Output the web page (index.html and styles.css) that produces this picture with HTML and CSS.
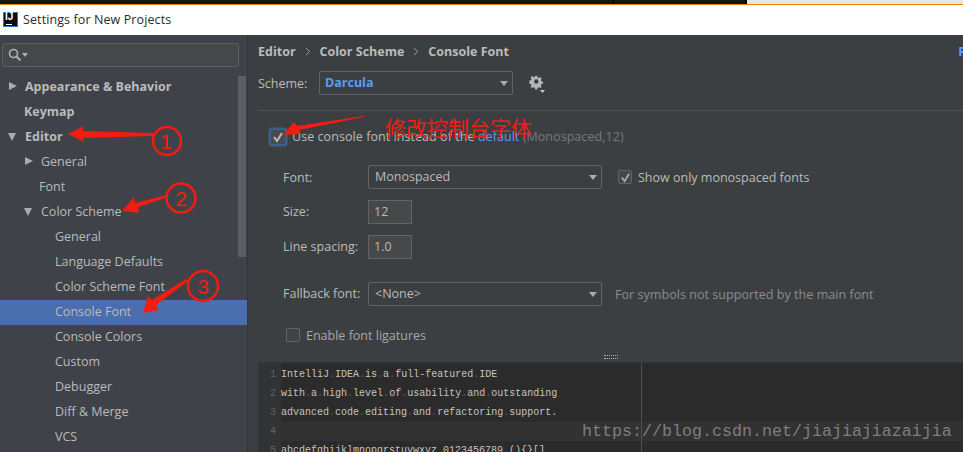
FILE: index.html
```html
<!DOCTYPE html>
<html lang="en">
<head>
<meta charset="utf-8">
<title>Settings for New Projects</title>
<link rel="stylesheet" href="styles.css">
</head>
<body>
<div class="strip"><div class="strip-dark"><span class="strip-tick"></span></div><div class="strip-light"></div></div>
<header class="titlebar">
  <div class="logo"><span class="logo-text">IJ</span><span class="logo-bar"></span></div>
  <span class="title">Settings for New Projects</span>
</header>
<main class="body">
  <aside class="sidebar">
    <div class="search">
      <svg class="search-icon" width="20" height="14" viewBox="0 0 20 14"><circle cx="5.5" cy="5.5" r="4" fill="none" stroke="#aeb0b2" stroke-width="1.6"/><path d="M8.5 8.5l4 4" stroke="#aeb0b2" stroke-width="2"/><path d="M14 5h6l-3 4z" fill="#aeb0b2"/></svg>
    </div>
    <ul class="tree">
      <li class="node bold lvl0"><span class="tri right"></span>Appearance &amp; Behavior</li>
      <li class="node bold lvl0b">Keymap</li>
      <li class="node bold lvl0"><span class="tri down"></span>Editor</li>
      <li class="node lvl1"><span class="tri right small"></span>General</li>
      <li class="node lvl1b">Font</li>
      <li class="node lvl1"><span class="tri down small"></span>Color Scheme</li>
      <li class="node lvl2">General</li>
      <li class="node lvl2">Language Defaults</li>
      <li class="node lvl2">Color Scheme Font</li>
      <li class="node lvl2 selected">Console Font</li>
      <li class="node lvl2">Console Colors</li>
      <li class="node lvl2">Custom</li>
      <li class="node lvl2">Debugger</li>
      <li class="node lvl2">Diff &amp; Merge</li>
      <li class="node lvl2">VCS</li>
    </ul>
    <div class="scrollbar"></div>
  </aside>
  <section class="panel">
    <nav class="crumbs">
      <span>Editor</span>
      <svg class="chev" width="6" height="9" viewBox="0 0 6 9"><path d="M1 1l3.5 3.5L1 8" fill="none" stroke="#9a9c9e"/></svg>
      <span>Color Scheme</span>
      <svg class="chev" width="6" height="9" viewBox="0 0 6 9"><path d="M1 1l3.5 3.5L1 8" fill="none" stroke="#9a9c9e"/></svg>
      <span>Console Font</span>
      <span class="reset">Reset</span>
    </nav>
    <div class="scheme">
      <span class="scheme-label">Scheme:</span>
      <div class="combo combo-scheme"><span class="scheme-name">Darcula</span><span class="caret"></span></div>
      <svg class="gear" width="18" height="20" viewBox="0 0 18 20"><path d="M7 1h2.6l.4 2 1.6.7 1.8-1.1 1.8 1.8-1.1 1.8.7 1.6 2 .4v2.6l-2 .4-.7 1.6 1.1 1.8-1.8 1.8-1.8-1.1-1.6.7-.4 2H7l-.4-2-1.6-.7-1.8 1.1-1.8-1.8 1.1-1.8-.7-1.6-2-.4V7l2-.4.7-1.6-1.1-1.8 1.8-1.8 1.8 1.1L6.600 3z" transform="translate(1.500 1) scale(.8)" fill="#b4b6b8"/><circle cx="8.300" cy="7.500" r="2.200" fill="#3c3f41"/><path d="M12 16h5l-2.500 3z" fill="#c8c8c8"/></svg>
    </div>
    <div class="separator"></div>
    <div class="use-row">
      <span class="check check-focus"><svg width="12" height="12" viewBox="0 0 12 12"><path d="M2 6l3 4 5-8" fill="none" stroke="#b9bbbd" stroke-width="2"/></svg></span>
      <span class="use-text">Use console font instead of the <span class="link">default</span> <span class="muted">(Monospaced,12)</span></span>
    </div>
    <div class="form">
      <div class="row row-font">
        <label class="lbl">Font:</label>
        <div class="combo combo-font">Monospaced<span class="caret"></span></div>
        <span class="check check-small"><svg width="11" height="11" viewBox="0 0 12 12"><path d="M2 6l3 4 5-8" fill="none" stroke="#a9abad" stroke-width="2"/></svg></span>
        <span class="after-check">Show only monospaced fonts</span>
      </div>
      <div class="row row-size">
        <label class="lbl">Size:</label>
        <div class="field">12</div>
      </div>
      <div class="row row-spacing">
        <label class="lbl">Line spacing:</label>
        <div class="field">1.0</div>
      </div>
      <div class="row row-fallback">
        <label class="lbl">Fallback font:</label>
        <div class="combo combo-font">&lt;None&gt;<span class="caret"></span></div>
        <span class="hint">For symbols not supported by the main font</span>
      </div>
      <div class="row row-lig">
        <span class="check check-empty"></span>
        <span class="lig-text">Enable font ligatures</span>
      </div>
    </div>
    <div class="splitter"><span class="grip"></span></div>
    <div class="preview">
      <div class="gutter"><div>1</div><div>2</div><div>3</div><div>4</div><div>5</div></div>
      <pre class="code"><div class="cl">IntelliJ<i>.</i>IDEA<i>.</i>is<i>.</i>a<i>.</i>full-featured<i>.</i>IDE</div><div class="cl">with<i>.</i>a<i>.</i>high<i>.</i>level<i>.</i>of<i>.</i>usability<i>.</i>and<i>.</i>outstanding</div><div class="cl">advanced<i>.</i>code<i>.</i>editing<i>.</i>and<i>.</i>refactoring<i>.</i>support.</div><div class="cl caretline"></div><div class="cl">abcdefghijklmnopqrstuvwxyz<i>.</i>0123456789<i>.</i>(){}[]</div></pre>
      <div class="margin-line"></div>
    </div>
  </section>
</main>
<svg class="marks" width="963" height="452" viewBox="0 0 963 452">
  <g fill="#f41c10">
    <polygon points="68,134 84,126 83,131 153,133 153,136 83,138 84,142"/>
    <polygon points="122,211 134,197 135,203 167,195 168,197 138,207 139,213"/>
    <polygon points="143,313 148,296 152,300 186,279 188,281 156,305 159,310"/>
    <polygon points="283,135 294,122 297,126 364,116 364,117 299,130 301,134"/>
  </g>
  <g fill="none" stroke="#f41c10" stroke-width="2.500">
    <circle cx="167" cy="141" r="14"/>
    <circle cx="181" cy="198" r="14.500"/>
    <circle cx="203" cy="286" r="15"/>
  </g>
  <g fill="#f41c10" font-family="'Liberation Sans',sans-serif" text-anchor="middle" font-size="21">
    <text x="166" y="149">1</text>
    <text x="181" y="206">2</text>
    <text x="203" y="294">3</text>
  </g>
</svg>
<div class="note">修改控制台字体</div>
<div class="watermark">https://blog.csdn.net/jiajiajiazaijia</div>
</body>
</html>
```
FILE: styles.css
```css
* { box-sizing: border-box; }
html, body { margin: 0; padding: 0; }
body {
  position: relative;
  width: 963px;
  height: 452px;
  overflow: hidden;
  background: #3c3f41;
  font-family: "Open Sans", "Noto Sans", sans-serif;
  font-size: 12.5px;
  color: #bbbbbb;
}
.strip { display: flex; height: 5px; border-bottom: 1px solid #e8820c; }
.strip-dark { width: 747px; background: #17130f; position: relative; border-right: 2px solid #000; }
.strip-tick { position: absolute; left: 613px; top: 0; width: 1px; height: 4px; background: #000; }
.strip-light { flex: 1; background: #e6e6e6; }

.titlebar { display: flex; align-items: center; height: 30px; background: #fff; padding: 0 0 2px 3px; color: #2a2a2a; }
.logo {
  position: relative; width: 15px; height: 15px; background: #0c0c10;
  border: 1px solid #2a78c8; color: #fff; display: block;
}
.logo-text { position: absolute; left: 1px; top: -3px; font: bold 10px/14px "Liberation Sans", sans-serif; }
.logo-bar { position: absolute; left: 2px; bottom: 1px; width: 6px; height: 1px; background: #fff; }
.title { margin-left: 5px; font-size: 12.5px; letter-spacing: .1px; }

.body { display: flex; height: 417px; }
.sidebar { position: relative; width: 248px; flex: none; background: #3f4249; border-right: 1px solid #33363a; padding-top: 8px; }
.search {
  margin-left: 2px; width: 237px; height: 24px; background: #45484a;
  border: 1px solid #5c5f61; border-radius: 3px; display: flex; align-items: center; padding-left: 5px;
}
.search-icon { display: block; }
.tree { list-style: none; margin: 8px 0 0; padding: 0; }
.node { position: relative; height: 25px; line-height: 23px; white-space: nowrap; }
.bold { font-weight: 700; font-size: 12.5px; }
.lvl0 { padding-left: 25px; }
.lvl0b { padding-left: 24px; }
.lvl1 { padding-left: 41px; }
.lvl1b { padding-left: 39px; }
.lvl2 { padding-left: 55px; }
.selected { background: #4b6eaf; }
.tri { position: absolute; width: 0; height: 0; }
.tri.right { left: 9px; top: 7px; border-left: 8px solid #a9abad; border-top: 4.5px solid transparent; border-bottom: 4.5px solid transparent; }
.tri.down { left: 8px; top: 8px; border-top: 8px solid #a9abad; border-left: 4.5px solid transparent; border-right: 4.5px solid transparent; }
.tri.right.small { left: 25px; }
.tri.down.small { left: 24px; }
.scrollbar { position: absolute; left: 238px; top: 41px; width: 8px; height: 181px; background: #5a5d63; }

.panel { position: relative; flex: 1; min-width: 0; padding-left: 10px; overflow: hidden; }
.crumbs { display: flex; align-items: center; height: 32px; font-weight: 700; gap: 8px; white-space: nowrap; }
.chev { display: block; margin: 0 1px; }
.reset { margin-left: auto; margin-right: -30px; color: #589df6; }
.scheme { display: flex; align-items: center; height: 24px; margin-top: 4px; }
.scheme-label { width: 61px; }
.combo {
  position: relative; height: 24px; line-height: 22px; border: 1px solid #646464;
  border-radius: 2px; background: #3c3f41; padding-left: 5px;
}
.combo-scheme { width: 194px; }
.scheme-name { color: #589df6; font-weight: 700; }
.caret {
  position: absolute; right: 4px; top: 9px; width: 0; height: 0;
  border-top: 5px solid #a9abad; border-left: 4.500px solid transparent; border-right: 4.500px solid transparent;
}
.gear { display: block; margin-left: 15px; margin-top: 2px; }
.separator { height: 1px; background: #515354; margin-top: 15px; }
.use-row { display: flex; align-items: center; height: 17px; margin-top: 17px; padding-left: 12px; white-space: nowrap; }
.check { display: flex; align-items: center; justify-content: center; flex: none; }
.check-focus { width: 16px; height: 16px; border: 1px solid #3d6185; border-radius: 2px; background: #474b4e; box-shadow: 0 0 0 1.500px #3d6185; }
.use-text { margin-left: 6px; letter-spacing: .06px; }
.link { color: #589df6; }
.muted { color: #777a7c; }
.form { padding-left: 25px; }
.row { display: flex; align-items: center; white-space: nowrap; }
.lbl { width: 85px; flex: none; padding-bottom: 2px; }
.row-font .lbl { padding-bottom: 0; }
.combo-font { width: 234px; padding-left: 6px; }
.field { width: 44px; height: 24px; line-height: 22px; border: 1px solid #646464; background: #45494a; padding-left: 5px; }
.row-font { margin-top: 20px; height: 24px; }
.row-size { margin-top: 11px; height: 24px; }
.row-spacing { margin-top: 11px; height: 24px; }
.row-fallback { margin-top: 23px; height: 24px; }
.row-lig { margin-top: 22px; height: 14px; padding-left: 3px; }
.check-small { width: 14px; height: 14px; margin-left: 16px; border: 1px solid #646464; border-radius: 2px; background: #43474a; }
.after-check { margin-left: 6px; }
.hint { margin-left: 13px; color: #8a8c8e; letter-spacing: .05px; }
.check-empty { width: 14px; height: 14px; border: 1px solid #646464; border-radius: 2px; background: #3f4345; }
.lig-text { margin-left: 6px; color: #a6a8aa; }
.splitter { display: flex; justify-content: center; align-items: flex-start; margin-top: 13px; height: 7px; }
.grip { width: 14px; height: 4px; border-top: 1px dotted #b0b0b0; border-bottom: 1px dotted #b0b0b0; }
.preview { position: absolute; left: 10px; right: 0; top: 327px; bottom: 0; display: flex; background: #2b2b2b; border-top: 1px solid #333638; }
.gutter { width: 23px; flex: none; background: #313335; color: #606366; font: 10px/19px "Liberation Mono", monospace; text-align: right; padding: 2px 5px 0 0; }
.code { flex: 1; margin: 0; padding-top: 2px; font: 10px/19px "Liberation Mono", monospace; color: #c4c4c4; }
.code i { font-style: normal; color: #5e6060; }
.cl { height: 19px; white-space: pre; }
.caretline { background: #323232; }
.margin-line { position: absolute; left: 383px; top: 0; bottom: 0; width: 1px; background: #515151; }

.marks { position: absolute; left: 0; top: 0; pointer-events: none; }
.note {
  position: absolute; left: 385px; top: 112px; font: 21px/30px "Noto Sans CJK SC", sans-serif; color: #f41c10; white-space: nowrap;
}
.watermark {
  position: absolute; left: 582px; top: 422px; font: 16.670px/20px "Liberation Mono", monospace; color: #7f7f7d; white-space: nowrap;
}
```
